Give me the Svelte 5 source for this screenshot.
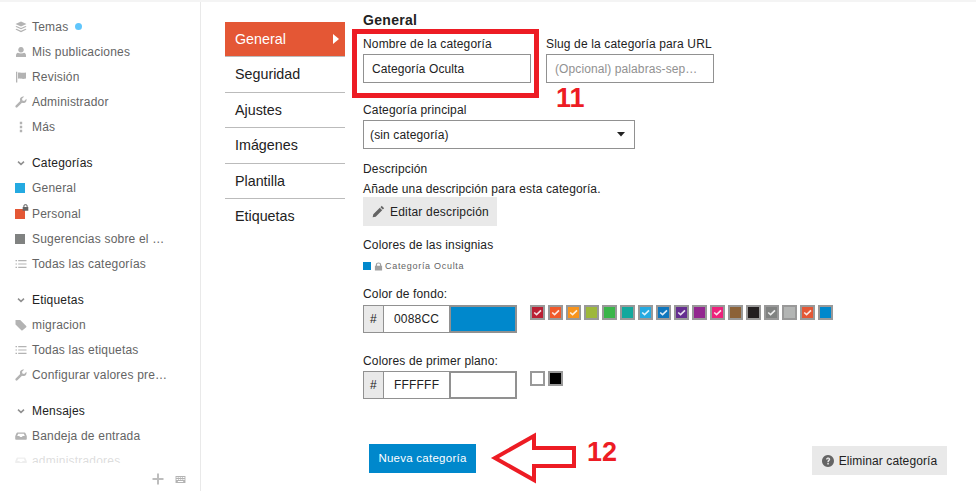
<script lang="ts">
  const icons: Record<string, string> = {
    layers: 'M6 0.5 L11.5 3 L6 5.5 L0.5 3 Z M1.5 5 L6 7 L10.5 5 L11.5 5.8 L6 8.3 L0.5 5.8 Z M1.5 7.8 L6 9.8 L10.5 7.8 L11.5 8.6 L6 11.2 L0.5 8.6 Z',
    user: 'M6 1 A2.8 2.8 0 1 1 5.99 1 Z M3 6.8 C4 7.6 8 7.6 9 6.8 C10.4 7 11 8.2 11 9.6 L11 11 L1 11 L1 9.6 C1 8.2 1.6 7 3 6.8 Z',
    flag: 'M1 0.8 H2.3 V11.5 H1 Z M3 1.6 C5 0.8 7 2.6 11 1.4 V7.6 C7 8.8 5 7 3 7.8 Z',
    wrench: 'M11.4 2.8 L9.2 5 L7.4 4.6 L7 2.8 L9.2 0.6 C7.4 0 5.4 1 5 2.8 C4.8 3.6 4.9 4.4 5.2 5 L0.7 9.6 C0.2 10.1 0.2 10.8 0.7 11.3 C1.2 11.8 1.9 11.8 2.4 11.3 L7 6.8 C7.6 7.1 8.4 7.2 9.2 7 C11 6.6 12 4.6 11.4 2.8 Z',
    dots: 'M4.8 0.8 H7.2 V3.2 H4.8 Z M4.8 4.8 H7.2 V7.2 H4.8 Z M4.8 8.8 H7.2 V11.2 H4.8 Z',
    list: 'M0.5 2 H2 V3.2 H0.5 Z M3.2 2 H11.5 V3.2 H3.2 Z M0.5 5.4 H2 V6.6 H0.5 Z M3.2 5.4 H11.5 V6.6 H3.2 Z M0.5 8.8 H2 V10 H0.5 Z M3.2 8.8 H11.5 V10 H3.2 Z',
    tag: 'M0.5 1 H5.2 L11.2 7 C11.6 7.4 11.6 7.9 11.2 8.3 L7.6 11.2 C7.2 11.6 6.7 11.6 6.3 11.2 L0.5 5.4 Z',
    inbox: 'M3 2.5 H9 C10 2.5 10.4 3 10.8 3.8 L11.8 6.2 V9 C11.8 9.5 11.4 9.8 11 9.8 H1 C0.6 9.8 0.2 9.5 0.2 9 V6.2 L1.2 3.8 C1.6 3 2 2.5 3 2.5 Z M3.2 3.8 L2.2 6 H4.4 L5 7 H7 L7.6 6 H9.8 L8.8 3.8 Z',
    plus: 'M5 0.5 H7 V5 H11.5 V7 H7 V11.5 H5 V7 H0.5 V5 H5 Z'
  };

  const topLinks = [
    { icon: 'layers', label: 'Temas', dot: true },
    { icon: 'user', label: 'Mis publicaciones' },
    { icon: 'flag', label: 'Revisión' },
    { icon: 'wrench', label: 'Administrador' },
    { icon: 'dots', label: 'Más' }
  ];
  const categories = [
    { color: '#25aae1', label: 'General' },
    { color: '#e45735', label: 'Personal', locked: true },
    { color: '#808281', label: 'Sugerencias sobre el …' },
    { icon: 'list', label: 'Todas las categorías' }
  ];
  const tags = [
    { icon: 'tag', label: 'migracion' },
    { icon: 'list', label: 'Todas las etiquetas' },
    { icon: 'wrench', label: 'Configurar valores pre…' }
  ];

  const tabs = ['General', 'Seguridad', 'Ajustes', 'Imágenes', 'Plantilla', 'Etiquetas'];

  const swatches = [
    ['#ba1f33', true], ['#f1592a', true], ['#f7941d', true], ['#9eb83b', false],
    ['#3ab54a', false], ['#12a89d', false], ['#25aae1', true], ['#0e76bd', true],
    ['#652d90', true], ['#92278f', false], ['#ed207b', true], ['#8c6238', false],
    ['#231f20', false], ['#808281', true], ['#b3b5b4', false], ['#e45735', true],
    ['#0088cc', false]
  ] as [string, boolean][];
</script>

{#snippet icon(name: string)}
  <svg class="ico" viewBox="0 0 12 12" width="12" height="12"><path d={icons[name]} fill-rule="evenodd" /></svg>
{/snippet}

{#snippet lock(size: number)}
  <svg class="lock" viewBox="0 0 10 10" width={size} height={size}>
    <path d="M2 4.2 V3 C2 1.4 3.4 0.5 5 0.5 C6.6 0.5 8 1.4 8 3 V4.2 H9 V9.5 H1 V4.2 Z M3.4 4.2 H6.6 V3 C6.6 2.2 5.9 1.8 5 1.8 C4.1 1.8 3.4 2.2 3.4 3 Z" fill-rule="evenodd" />
  </svg>
{/snippet}

{#snippet sectionHead(label: string)}
  <div class="row head">
    <svg class="ico chev" viewBox="0 0 12 12" width="12" height="12"><path d="M3 4.6 L6 7.4 L9 4.6" fill="none" stroke-width="1.5" /></svg>
    <span>{label}</span>
  </div>
{/snippet}

<div class="page">
  <aside class="sidebar">
    <div class="links">
      <section>
        {#each topLinks as l}
          <div class="row">
            {@render icon(l.icon)}
            <span>{l.label}</span>
            {#if l.dot}<i class="dot"></i>{/if}
          </div>
        {/each}
      </section>

      <section>
        {@render sectionHead('Categorías')}
        {#each categories as c}
          <div class="row">
            {#if c.icon}
              {@render icon(c.icon)}
            {:else}
              <i class="square" style:background={c.color}>
                {#if c.locked}{@render lock(7)}{/if}
              </i>
            {/if}
            <span>{c.label}</span>
          </div>
        {/each}
      </section>

      <section>
        {@render sectionHead('Etiquetas')}
        {#each tags as t}
          <div class="row">
            {@render icon(t.icon)}
            <span>{t.label}</span>
          </div>
        {/each}
      </section>

      <section>
        {@render sectionHead('Mensajes')}
        <div class="row">
          {@render icon('inbox')}
          <span>Bandeja de entrada</span>
        </div>
        <div class="row">
          {@render icon('inbox')}
          <span>administradores</span>
        </div>
      </section>
    </div>
    <footer class="side-foot">
      <svg class="ico plus" viewBox="0 0 12 12" width="12" height="12"><path d={icons.plus} /></svg>
      <svg class="ico kbd" viewBox="0 0 12 10" width="11" height="9">
        <path d="M0.5 1 H11.5 V9 H0.5 Z M1.5 2.2 V3.4 H3 V2.2 Z M3.8 2.2 V3.4 H5.3 V2.2 Z M6.1 2.2 V3.4 H7.6 V2.2 Z M8.4 2.2 V3.4 H10.5 V2.2 Z M1.5 4.4 V5.6 H3.6 V4.4 Z M4.4 4.4 V5.6 H5.9 V4.4 Z M6.7 4.4 V5.6 H8.2 V4.4 Z M9 4.4 V5.6 H10.5 V4.4 Z M3 6.7 V7.9 H9 V6.7 Z" fill-rule="evenodd" />
      </svg>
    </footer>
  </aside>

  <main class="main">
    <nav class="tabs">
      {#each tabs as t, i}
        <div class="tab" class:active={i === 0}>{t}</div>
      {/each}
    </nav>

    <form class="form">
      <h3>General</h3>

      <div class="name-row">
        <div class="field">
          <label for="cat-name">Nombre de la categoría</label>
          <input id="cat-name" class="name" value="Categoría Oculta" />
        </div>
        <div class="field">
          <label for="cat-slug">Slug de la categoría para URL</label>
          <input id="cat-slug" class="slug" placeholder="(Opcional) palabras-sep…" />
        </div>
      </div>

      <div class="field parent">
        <span class="lbl">Categoría principal</span>
        <div class="select">
          <span>(sin categoría)</span>
          <svg viewBox="0 0 8 5" width="8" height="5"><path d="M0 0 H8 L4 4.6 Z" fill="#222" /></svg>
        </div>
      </div>

      <div class="desc">
        <span class="lbl">Descripción</span>
        <p>Añade una descripción para esta categoría.</p>
        <button type="button" class="btn-edit">
          <svg viewBox="0 0 12 12" width="13" height="13"><path d="M9 0.8 L11.2 3 L10 4.2 L7.8 2 Z M7.2 2.6 L9.4 4.8 L3.4 10.8 L0.6 11.4 L1.2 8.6 Z" fill="#646464" /></svg>
          Editar descripción
        </button>
      </div>

      <div class="badge-block">
        <span class="lbl">Colores de las insignias</span>
        <div class="badge">
          <i class="badge-sq"></i>
          {@render lock(9)}
          <span>Categoría Oculta</span>
        </div>
      </div>

      <div class="color-block bg">
        <span class="lbl">Color de fondo:</span>
        <div class="color-row">
          <div class="hex">
            <span class="hash">#</span>
            <span class="val">0088CC</span>
            <span class="preview" style:background="#0088cc"></span>
          </div>
          <div class="swatches">
            {#each swatches as [c, used]}
              <span class="swatch" style:background={c}>
                {#if used}
                  <svg viewBox="0 0 12 12" width="11" height="11"><path d="M2.4 6 L5 8.4 L9.8 3.6" fill="none" stroke="#fff" stroke-opacity=".85" stroke-width="1.8" /></svg>
                {/if}
              </span>
            {/each}
          </div>
        </div>
      </div>

      <div class="color-block fg">
        <span class="lbl">Colores de primer plano:</span>
        <div class="color-row">
          <div class="hex">
            <span class="hash">#</span>
            <span class="val">FFFFFF</span>
            <span class="preview" style:background="#fff"></span>
          </div>
          <div class="swatches">
            <span class="swatch" style:background="#fff"></span>
            <span class="swatch" style:background="#000"></span>
          </div>
        </div>
      </div>

      <div class="actions">
        <button type="button" class="btn-new">Nueva categoría</button>
      </div>
    </form>

    <button type="button" class="btn-delete">
      <svg viewBox="0 0 12 12" width="12" height="12">
        <path d="M6 0 A6 6 0 1 1 5.99 0 Z M4 4.4 H5.4 C5.5 3.7 6.6 3.6 6.7 4.3 C6.8 5 5.4 5.3 5.4 6.8 V7.2 H6.7 C6.7 6 8.2 5.8 8.2 4.3 C8.2 2 4.2 2 4 4.4 Z M5.3 8 V9.5 H6.8 V8 Z" fill="#646464" fill-rule="evenodd" />
      </svg>
      Eliminar categoría
    </button>

    <div class="mark mark-box"></div>
    <div class="mark num n11">11</div>
    <div class="mark num n12">12</div>
    <svg class="mark arrow" viewBox="0 0 90 54" width="90" height="54">
      <path d="M5 27 L44 5 V17 H84 V35 H44 V49 Z" fill="#fff" stroke="#ed1c24" stroke-width="4" />
    </svg>
  </main>
</div>

<style>
  :global(body) {
    margin: 0;
    background: #fff;
  }
  .page {
    display: flex;
    width: 976px;
    height: 491px;
    overflow: hidden;
    font-family: "Liberation Sans", Arial, sans-serif;
    font-size: 12px;
    color: #222;
    border-top: 2px solid #f4f4f4;
    box-sizing: border-box;
  }

  /* sidebar */
  .sidebar {
    flex: none;
    width: 201px;
    box-sizing: border-box;
    border-right: 1px solid #e9e9e9;
    display: flex;
    flex-direction: column;
    position: relative;
  }
  .links {
    flex: 1;
    min-height: 0;
    overflow: hidden;
    padding: 12px 0 0 15px;
    position: relative;
  }
  .links section {
    margin-bottom: 10.6px;
  }
  .links::after {
    content: '';
    position: absolute;
    left: 0;
    right: 0;
    bottom: 0;
    height: 14px;
    background: rgba(255, 255, 255, 0.78);
  }
  .row {
    display: flex;
    align-items: center;
    height: 25.2px;
    color: #646464;
    letter-spacing: 0.2px;
    white-space: nowrap;
  }
  .row span {
    margin-left: 5px;
  }
  .row.head {
    color: #222;
  }
  .ico {
    flex: none;
    fill: #b3b3b3;
    stroke: none;
  }
  .chev {
    stroke: #8f8f8f;
    fill: none;
  }
  .dot {
    width: 7px;
    height: 7px;
    border-radius: 50%;
    background: #60c6fc;
    margin-left: 7px;
  }
  .square {
    flex: none;
    width: 10px;
    height: 10px;
    margin-right: 2px;
    position: relative;
    display: block;
  }
  .lock {
    fill: #646464;
    flex: none;
  }
  .square .lock {
    position: absolute;
    top: -5px;
    right: -4px;
  }
  .side-foot {
    flex: none;
    height: 28px;
    box-sizing: border-box;
    padding: 4px 14px 0 0;
    display: flex;
    justify-content: flex-end;
    align-items: center;
    gap: 11px;
  }
  .plus {
    fill: #bdbdbd;
  }
  .kbd {
    fill: #b3b3b3;
  }

  /* main */
  .main {
    flex: 1;
    display: flex;
    align-items: flex-start;
    position: relative;
    padding: 20px 0 0 24px;
  }
  .tabs {
    flex: none;
    width: 120px;
    margin-right: 18px;
  }
  .tab {
    line-height: 35.4px;
    padding-left: 10px;
    border-bottom: 1px solid #bbb;
    font-size: 14.3px;
    color: #222;
    height: 34.4px;
  }
  .tab:last-child {
    border-bottom: 0;
  }
  .tab.active {
    background: #e45735;
    color: #fff;
    position: relative;
  }
  .tab.active::after {
    content: '';
    position: absolute;
    right: 6px;
    top: 12px;
    border-left: 6px solid #fff;
    border-top: 5.5px solid transparent;
    border-bottom: 5.5px solid transparent;
  }

  .form {
    flex: none;
    width: 480px;
    display: flex;
    flex-direction: column;
    margin-top: -10px;
  }
  h3 {
    margin: 0 0 8px;
    font-size: 14px;
    line-height: 17px;
    letter-spacing: 0.3px;
    color: #222;
  }
  label,
  .lbl {
    display: block;
    font-size: 12px;
    line-height: 15px;
    letter-spacing: 0.15px;
    color: #222;
  }
  .name-row {
    display: flex;
    gap: 15px;
  }
  .field input {
    display: block;
    box-sizing: border-box;
    height: 29px;
    margin-top: 2px;
    border: 1px solid #919191;
    padding: 0 8px;
    font: inherit;
    letter-spacing: 0.1px;
    color: #222;
    outline: none;
  }
  .name {
    width: 168px;
  }
  .slug {
    width: 168px;
  }
  .slug::placeholder {
    color: #919191;
    opacity: 1;
  }
  .parent {
    margin-top: 20px;
  }
  .select {
    box-sizing: border-box;
    width: 272px;
    height: 29px;
    margin-top: 2px;
    border: 1px solid #919191;
    display: flex;
    align-items: center;
    justify-content: space-between;
    padding: 0 9px 0 6px;
    letter-spacing: 0.13px;
  }
  .desc {
    margin-top: 13px;
  }
  .desc p {
    margin: 5px 0 0;
    line-height: 15px;
    letter-spacing: 0.13px;
  }
  .btn-edit {
    display: flex;
    align-items: center;
    gap: 5px;
    height: 29px;
    width: 134px;
    border: 0;
    padding: 0 0 0 9px;
    background: #e9e9e9;
    color: #222;
    font: inherit;
    letter-spacing: 0.2px;
  }
  .badge-block {
    margin-top: 12px;
  }
  .badge {
    display: flex;
    align-items: center;
    margin-top: 7px;
    height: 12px;
    font-size: 9px;
    letter-spacing: 0.7px;
    color: #646464;
  }
  .badge .lock {
    fill: #a0a0a0;
    margin: 0 2px 0 3px;
  }
  .badge-sq {
    width: 8px;
    height: 8px;
    background: #0088cc;
  }
  .color-block.bg {
    margin-top: 15px;
  }
  .color-block.fg {
    margin-top: 21px;
  }
  .color-row {
    display: flex;
    gap: 13px;
    margin-top: 3px;
  }
  .fg .color-row {
    margin-top: 2px;
  }
  .hex {
    display: flex;
    width: 154px;
    height: 28px;
    letter-spacing: 0.2px;
  }
  .hash {
    width: 21px;
    box-sizing: border-box;
    background: #e9e9e9;
    border: 1px solid #919191;
    text-align: center;
    line-height: 26px;
    flex: none;
  }
  .val {
    width: 65px;
    flex: none;
    line-height: 26px;
    padding-left: 10px;
    box-sizing: border-box;
    border: 1px solid #919191;
    border-left: 0;
    border-right: 0;
  }
  .preview {
    flex: 1;
    border: 2px solid #919191;
  }
  .swatches {
    display: flex;
    gap: 3px;
  }
  .swatch {
    box-sizing: border-box;
    width: 15px;
    height: 15px;
    border: 2px solid #999;
    display: flex;
    align-items: center;
    justify-content: center;
  }
  .actions {
    margin-top: 45px;
    padding-left: 6px;
  }
  .btn-new {
    width: 107px;
    height: 29px;
    border: 0;
    background: #0088cc;
    color: #fff;
    font: inherit;
    font-size: 11.5px;
    letter-spacing: 0.25px;
    padding: 0 0 2px;
  }
  .btn-delete {
    position: absolute;
    left: 611px;
    top: 444px;
    width: 135px;
    height: 29px;
    border: 0;
    background: #e9e9e9;
    color: #222;
    font: inherit;
    letter-spacing: 0.1px;
    display: flex;
    align-items: center;
    justify-content: center;
    gap: 5px;
    padding: 0;
  }

  /* annotations drawn on top of the screenshot */
  .mark {
    position: absolute;
  }
  .mark-box {
    left: 151px;
    top: 27px;
    width: 187px;
    height: 69px;
    box-sizing: border-box;
    border: 5px solid #ed1c24;
  }
  .num {
    font-family: "Liberation Sans", Arial, sans-serif;
    font-weight: 700;
    font-size: 27px;
    line-height: 28px;
    color: #ed1c24;
  }
  .n11 {
    left: 355px;
    top: 82px;
  }
  .n12 {
    left: 386px;
    top: 436px;
  }
  .arrow {
    left: 289px;
    top: 429px;
  }
</style>
